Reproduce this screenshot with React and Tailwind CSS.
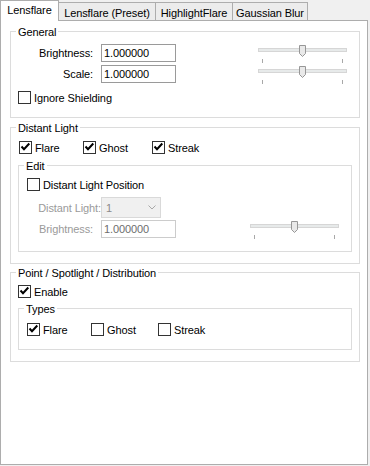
import React from "react";

const tabs = [
  { label: "Lensflare", w: "w-[59px]", selected: true },
  { label: "Lensflare (Preset)", w: "w-[97px]" },
  { label: "HighlightFlare", w: "w-[77px]" },
  { label: "Gaussian Blur", w: "w-[75px]" },
];

function Tab({ label, w, selected }) {
  if (selected) {
    return (
      <div
        className={`relative z-10 -mb-px h-[21px] ${w} shrink-0 border border-b-0 border-[#adadad] bg-white pt-[2px] text-center`}
      >
        {label}
      </div>
    );
  }
  return (
    <div
      className={`h-[18px] ${w} shrink-0 border-t border-r border-[#adadad] bg-[#ececec] pt-[3px] text-center`}
    >
      {label}
    </div>
  );
}

function Checkbox({ checked, label, className = "" }) {
  return (
    <div className={`flex h-[13px] items-center ${className}`}>
      <span className="flex h-[13px] w-[13px] shrink-0 items-center justify-center border border-[#333] bg-white">
        {checked && (
          <svg width="11" height="11" viewBox="0 0 11 11">
            <path d="M1.5 4.5 L4 7.2 L9.3 1.5" fill="none" stroke="#000" strokeWidth="2" />
          </svg>
        )}
      </span>
      <span className="ml-[3px] whitespace-nowrap">{label}</span>
    </div>
  );
}

function Slider() {
  return (
    <svg width="89" height="18" viewBox="0 0 89 18" className="block">
      <rect x="0.5" y="3.5" width="88" height="3" fill="#e7eaea" stroke="#d6d6d6" />
      <path d="M41.5 0.5 H47.5 V8.5 L44.5 11.5 L41.5 8.5 Z" fill="#e9e9e9" stroke="#979797" />
      <line x1="4.5" y1="14" x2="4.5" y2="18" stroke="#a8a8a8" />
      <line x1="84.5" y1="14" x2="84.5" y2="18" stroke="#a8a8a8" />
    </svg>
  );
}

function TextBox({ value, disabled }) {
  return (
    <div
      className={`flex h-[18px] w-[75px] items-center border bg-white pl-[2px] ${
        disabled ? "border-[#cccccc] text-[#6d6d6d]" : "border-[#9a9a9a]"
      }`}
    >
      {value}
    </div>
  );
}

function Group({ title, className = "", children }) {
  return (
    <fieldset className={`border border-[#dcdcdc] ${className}`}>
      <legend className="ml-[5px] px-[2px] pt-[2px] leading-[14px]">{title}</legend>
      {children}
    </fieldset>
  );
}

export default function App() {
  return (
    <div className="h-[466px] w-[370px] bg-[#f0f0f0] font-['Liberation_Sans',Arial,sans-serif] text-[11px] leading-[14px] tracking-[-0.1px] text-black">
      <div className="flex h-[20px] items-end">
        {tabs.map((t) => (
          <Tab key={t.label} {...t} />
        ))}
      </div>

      <div className="h-[445px] w-[368px] border border-[#adadad] bg-white pt-[2px] pl-[9px]">
        <Group title="General" className="w-[350px] pb-[13px]">
          <div className="mt-[5px] flex">
            <div className="flex flex-col gap-[3px]">
              <div className="flex items-center">
                <span className="w-[90px] pr-[8px] text-right">Brightness:</span>
                <TextBox value="1.000000" />
              </div>
              <div className="flex items-center">
                <span className="w-[90px] pr-[8px] text-right">Scale:</span>
                <TextBox value="1.000000" />
              </div>
            </div>
            <div className="mr-[12px] ml-auto flex flex-col gap-[3px] pt-[1px]">
              <Slider />
              <Slider />
            </div>
          </div>
          <Checkbox label="Ignore Shielding" className="mt-[7px] ml-[7px]" />
        </Group>

        <Group title="Distant Light" className="mt-[1px] w-[350px] pb-[11px]">
          <div className="mt-[6px] ml-[8px] flex">
            <Checkbox checked label="Flare" className="w-[64px]" />
            <Checkbox checked label="Ghost" className="w-[69px]" />
            <Checkbox checked label="Streak" />
          </div>

          <Group title="Edit" className="mt-[3px] ml-[7px] w-[334px] pb-[12px]">
            <Checkbox label="Distant Light Position" className="mt-[5px] ml-[8px]" />
            <div className="mt-[6px] flex">
              <div className="flex flex-col gap-[2px]">
                <div className="flex items-center">
                  <span className="w-[82px] text-right text-[#9a9a9a]">Distant Light:</span>
                  <div className="flex h-[21px] w-[60px] items-center justify-between border border-[#d9d9d9] bg-[#f0f0f0] pr-[4px] pl-[4px] text-[#8a8a8a]">
                    <span>1</span>
                    <svg width="8" height="5" viewBox="0 0 8 5">
                      <path d="M0.5 0.5 L4 4 L7.5 0.5" fill="none" stroke="#a8a8a8" />
                    </svg>
                  </div>
                </div>
                <div className="flex items-center">
                  <span className="w-[82px] pr-[8px] text-right text-[#9a9a9a]">Brightness:</span>
                  <TextBox value="1.000000" disabled />
                </div>
              </div>
              <div className="mr-[12px] ml-auto pt-[24px]">
                <Slider />
              </div>
            </div>
          </Group>
        </Group>

        <Group title="Point / Spotlight / Distribution" className="w-[350px] pb-[11px]">
          <Checkbox checked label="Enable" className="mt-[5px] ml-[7px]" />
          <Group title="Types" className="mt-[2px] ml-[7px] w-[334px] pb-[13px]">
            <div className="mt-[7px] ml-[8px] flex">
              <Checkbox checked label="Flare" className="w-[64px]" />
              <Checkbox label="Ghost" className="w-[67px]" />
              <Checkbox label="Streak" />
            </div>
          </Group>
        </Group>
      </div>
    </div>
  );
}
